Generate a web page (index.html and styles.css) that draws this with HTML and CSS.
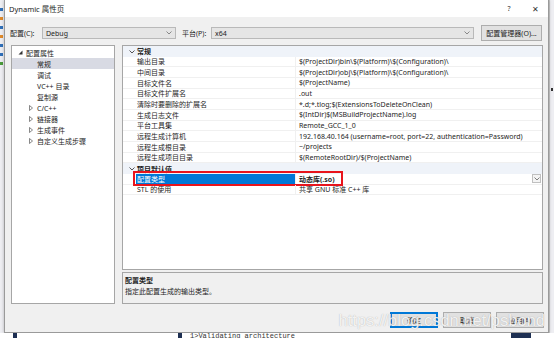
FILE: index.html
```html
<!DOCTYPE html>
<html lang="zh-CN">
<head>
  <meta charset="UTF-8">
  <title>Dynamic 属性页</title>
  <link rel="stylesheet" href="styles.css">
</head>
<body>

<div class="screen">
  <div class="bg-left">
    <i class="dot blue"></i>
    <i class="dot orange"></i>
    <i class="dot blue"></i>
    <i class="dot orange"></i>
    <i class="dot blue"></i>
    <i class="dot blue"></i>
    <i class="dot green"></i>
  </div>

  <div class="dialog">
    <div class="titlebar">
      <span class="title">Dynamic 属性页</span>
      <span class="tb-btn">?</span>
      <span class="tb-btn close">✕</span>
    </div>

    <div class="toolbar">
      <span class="tb-label">配置(C):</span>
      <div class="combo cfg">
        <span>Debug</span>
        <svg width="6" height="4" viewBox="0 0 6 4"><polyline points="0.5,0.5 3,3 5.5,0.5" fill="none" stroke="#707070" stroke-width="0.8"/></svg>
      </div>
      <span class="tb-label plat-label">平台(P):</span>
      <div class="combo plat">
        <span>x64</span>
        <svg width="6" height="4" viewBox="0 0 6 4"><polyline points="0.5,0.5 3,3 5.5,0.5" fill="none" stroke="#707070" stroke-width="0.8"/></svg>
      </div>
      <button type="button" class="btn mgr">配置管理器(O)...</button>
    </div>

    <div class="main">
      <!-- 左侧树 -->
      <div class="tree">
        <div class="node root">
          <svg class="arrow" width="5" height="5" viewBox="0 0 5 5"><polygon points="4.5,0.5 4.5,4.5 0.5,4.5" fill="#333"/></svg>
          配置属性
        </div>
        <div class="node leaf selected">常规</div>
        <div class="node leaf">调试</div>
        <div class="node leaf">VC++ 目录</div>
        <div class="node leaf">复制源</div>
        <div class="node branch">
          <svg class="arrow" width="4" height="6" viewBox="0 0 4 6"><polygon points="0.5,0.5 3.5,3 0.5,5.5" fill="none" stroke="#555" stroke-width="0.7"/></svg>
          C/C++
        </div>
        <div class="node branch">
          <svg class="arrow" width="4" height="6" viewBox="0 0 4 6"><polygon points="0.5,0.5 3.5,3 0.5,5.5" fill="none" stroke="#555" stroke-width="0.7"/></svg>
          链接器
        </div>
        <div class="node branch">
          <svg class="arrow" width="4" height="6" viewBox="0 0 4 6"><polygon points="0.5,0.5 3.5,3 0.5,5.5" fill="none" stroke="#555" stroke-width="0.7"/></svg>
          生成事件
        </div>
        <div class="node branch">
          <svg class="arrow" width="4" height="6" viewBox="0 0 4 6"><polygon points="0.5,0.5 3.5,3 0.5,5.5" fill="none" stroke="#555" stroke-width="0.7"/></svg>
          自定义生成步骤
        </div>
      </div>

      <div class="right">
        <!-- 属性表 -->
        <div class="grid">
          <div class="row cat">
            <svg class="chev" width="6" height="4" viewBox="0 0 6 4"><polyline points="0.5,0.5 3,3 5.5,0.5" fill="none" stroke="#444" stroke-width="0.9"/></svg>
            <span class="name">常规</span>
          </div>
          <div class="row"><span class="name">输出目录</span><span class="val">$(ProjectDir)bin\$(Platform)\$(Configuration)\</span></div>
          <div class="row"><span class="name">中间目录</span><span class="val">$(ProjectDir)obj\$(Platform)\$(Configuration)\</span></div>
          <div class="row"><span class="name">目标文件名</span><span class="val">$(ProjectName)</span></div>
          <div class="row"><span class="name">目标文件扩展名</span><span class="val">.out</span></div>
          <div class="row"><span class="name">清除时要删除的扩展名</span><span class="val">*.d;*.tlog;$(ExtensionsToDeleteOnClean)</span></div>
          <div class="row"><span class="name">生成日志文件</span><span class="val">$(IntDir)$(MSBuildProjectName).log</span></div>
          <div class="row"><span class="name">平台工具集</span><span class="val">Remote_GCC_1_0</span></div>
          <div class="row"><span class="name">远程生成计算机</span><span class="val">192.168.40.164 (username=root, port=22, authentication=Password)</span></div>
          <div class="row"><span class="name">远程生成根目录</span><span class="val">~/projects</span></div>
          <div class="row"><span class="name">远程生成项目目录</span><span class="val">$(RemoteRootDir)/$(ProjectName)</span></div>
          <div class="row cat">
            <svg class="chev" width="6" height="4" viewBox="0 0 6 4"><polyline points="0.5,0.5 3,3 5.5,0.5" fill="none" stroke="#444" stroke-width="0.9"/></svg>
            <span class="name">项目默认值</span>
          </div>
          <div class="row active">
            <span class="name">配置类型</span>
            <span class="val">动态库(.so)</span>
            <span class="drop">
              <svg width="6" height="4" viewBox="0 0 6 4"><polyline points="0.5,0.5 3,3 5.5,0.5" fill="none" stroke="#606060" stroke-width="0.8"/></svg>
            </span>
            <span class="mark"></span>
          </div>
          <div class="row"><span class="name">STL 的使用</span><span class="val">共享 GNU 标准 C++ 库</span></div>
        </div>

        <div class="desc">
          <div class="desc-title">配置类型</div>
          <div class="desc-text">指定此配置生成的输出类型。</div>
        </div>
      </div>
    </div>

    <div class="buttons">
      <button type="button" class="btn ok">确定</button>
      <button type="button" class="btn">取消</button>
      <button type="button" class="btn">应用(A)</button>
    </div>

    <div class="watermark">https://blog.csdn.net/psbond</div>
  </div>

  <div class="bg-right"><i class="pin"></i></div>
</div>

<div class="bg-bottom">
  <i class="blk b1"></i>
  <i class="blk b2"></i>
  <span class="out">1&gt;Validating architecture</span>
  <i class="blk b3"></i>
</div>

</body>
</html>
```

FILE: styles.css
```css
body {
  margin: 0;
  width: 554px;
  height: 338px;
  overflow: hidden;
  background: #f5f5f5;
  font-family: "Noto Sans", "Noto Sans CJK SC", sans-serif;
  font-size: 7px;
  color: #1e1e1e;
}

.screen {
  display: flex;
  height: 333px;
}

.bg-left {
  width: 4px;
  background: #eeeef2;
  display: flex;
  flex-direction: column;
  gap: 6px;
  padding-top: 8px;
  box-sizing: border-box;
}

.dot {
  display: block;
  width: 3px;
  height: 3px;
}

.dot.blue { background: #2f6fb8; }
.dot.orange { background: #e08a2a; }
.dot.green { background: #4a9a3a; }

.bg-right {
  width: 5px;
  background: #eeeef2;
  border-left: 1px solid #c8c8c8;
  box-sizing: border-box;
  padding-top: 88px;
}

.pin {
  display: block;
  width: 2px;
  height: 3px;
  margin-left: 1px;
  background: #333;
}

.bg-bottom {
  height: 5px;
  background: #fff;
  display: flex;
  align-items: flex-start;
  position: relative;
}

.blk {
  display: block;
  width: 4px;
  height: 5px;
  background: #1d2f52;
}

.b1 { margin-left: 13px; }
.b2 { margin-left: 161px; }
.b3 { margin-left: auto; margin-right: 23px; width: 20px; }

.out {
  margin-left: 8px;
  font-family: "Liberation Mono", monospace;
  font-size: 7px;
  line-height: 7px;
  margin-top: 0;
  color: #333;
}

.dialog {
  position: relative;
  width: 545px;
  height: 333px;
  box-sizing: border-box;
  border: 1px solid #9a9a9a;
  border-top: none;
  background: #f0f0f0;
  box-shadow: 0 0 3px rgba(0,0,0,0.25);
}

.titlebar {
  height: 17px;
  background: #fff;
  display: flex;
  align-items: center;
  padding-left: 4px;
  font-size: 7.5px;
}

.title {
  flex: 1;
}

.tb-btn {
  width: 26px;
  text-align: center;
  color: #333;
  font-size: 7px;
}

.tb-btn.close {
  font-size: 8px;
  margin-right: 0;
}

.toolbar {
  display: flex;
  align-items: center;
  height: 16px;
  margin-top: 8px;
  padding-left: 5px;
}

.tb-label {
  width: 32px;
}

.plat-label {
  width: 29px;
  margin-left: 6px;
}

.combo {
  height: 12px;
  box-sizing: border-box;
  border: 1px solid #b9b9b9;
  background: #e5e5e5;
  display: flex;
  align-items: center;
  justify-content: space-between;
  padding: 0 3px 0 3px;
}

.combo.cfg { width: 134px; }
.combo.plat { width: 263px; }

.btn {
  font-family: inherit;
  font-size: 7px;
  color: #1e1e1e;
  background: #e1e1e1;
  border: 1px solid #adadad;
  padding: 0;
  height: 16px;
  width: 48px;
}

.btn.mgr {
  width: 61px;
  margin-left: 7px;
}

.btn.ok {
  border-color: #0078d7;
  box-shadow: inset 0 0 0 1px #0078d7;
}

.main {
  display: flex;
  gap: 7px;
  height: 259px;
  margin-top: 4px;
  padding-left: 6px;
}

.tree {
  width: 104px;
  box-sizing: border-box;
  border: 1px solid #a6a6a6;
  background: #fff;
  padding-top: 1px;
}

.node {
  height: 11.1px;
  display: flex;
  align-items: center;
  white-space: nowrap;
}

.node.root { padding-left: 6px; }
.node.root .arrow { margin-right: 3px; }
.node.leaf { padding-left: 25px; }
.node.branch { padding-left: 17px; }
.node.branch .arrow { margin-right: 4px; }

.node.selected {
  background: #d8dae3;
}

.right {
  width: 421px;
  display: flex;
  flex-direction: column;
  gap: 2px;
}

.grid {
  height: 225px;
  box-sizing: border-box;
  border: 1px solid #a6a6a6;
  background: #fff;
  position: relative;
}

.row {
  height: 10.67px;
  box-sizing: border-box;
  border-bottom: 1px solid #f0f0f0;
  display: flex;
  align-items: center;
  position: relative;
  white-space: nowrap;
}

.row .name {
  width: 160px;
  margin-left: 13px;
  padding-left: 1px;
  height: 100%;
  display: flex;
  align-items: center;
  border-right: 1px solid #f0f0f0;
  box-sizing: border-box;
}

.row .val {
  padding-left: 3px;
}

.row.cat {
  background: #eff3f9;
  border-bottom: none;
}

.row.cat .chev {
  position: absolute;
  left: 6px;
  top: 4px;
}

.row.cat .name {
  font-weight: bold;
  border-right: none;
}

.row.active .name {
  background: #0078d7;
  color: #fff;
}

.row.active .val {
  font-weight: bold;
  flex: 1;
}

.drop {
  width: 9px;
  height: 9px;
  box-sizing: border-box;
  border: 1px solid #c0c0c0;
  background: #f4f4f4;
  display: flex;
  align-items: center;
  justify-content: center;
  margin-right: 1px;
}

.mark {
  position: absolute;
  left: 10px;
  top: -3px;
  width: 210px;
  height: 15px;
  box-sizing: border-box;
  border: 2px solid #e8141c;
}

.desc {
  flex: 1;
  box-sizing: border-box;
  border: 1px solid #a6a6a6;
  padding: 3px 2px;
}

.desc-title {
  font-weight: bold;
  line-height: 10px;
}

.desc-text {
  line-height: 12px;
}

.buttons {
  display: flex;
  justify-content: flex-end;
  gap: 5px;
  margin-top: 8px;
  padding-right: 4px;
}

.watermark {
  position: absolute;
  right: 3px;
  bottom: 2px;
  font-family: "Liberation Sans", sans-serif;
  font-size: 16.5px;
  color: rgba(255,255,255,0.85);
  text-shadow: 0 0 1px rgba(120,120,120,0.6);
  pointer-events: none;
}
```
